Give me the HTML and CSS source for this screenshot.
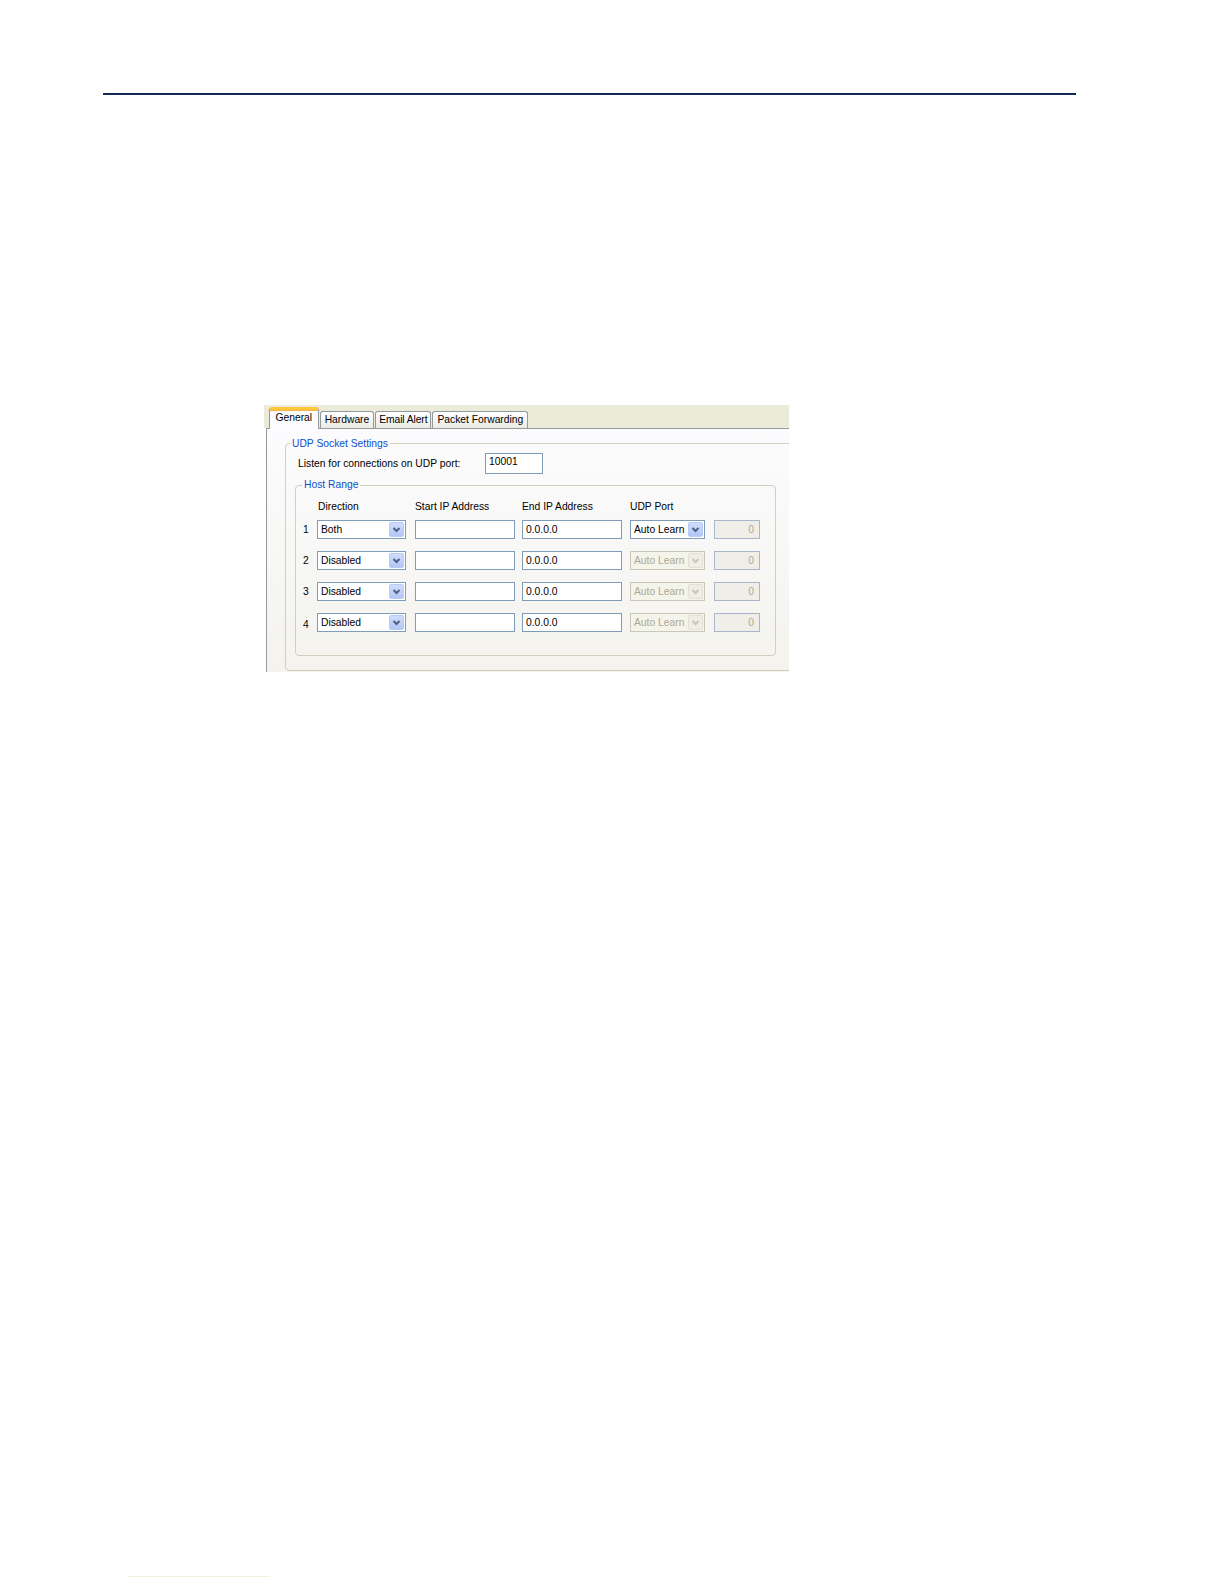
FILE: index.html
```html
<!DOCTYPE html>
<html lang="en">
<head>
  <meta charset="UTF-8" />
  <title>UDP Socket Settings</title>
  <link rel="stylesheet" href="styles.css">
</head>
<body>

  <div class="rule"></div>

  <div class="shot">
    <div class="tabs">
      <div class="tab active">General</div>
      <div class="tab">Hardware</div>
      <div class="tab email">Email Alert</div>
      <div class="tab">Packet Forwarding</div>
    </div>

    <div class="panel">
      <div class="group outer">
        <div class="group-title">UDP Socket Settings</div>

        <div class="listen">
          <span class="listen-label">Listen for connections on UDP port:</span>
          <div class="field port">10001</div>
        </div>

        <div class="group inner">
          <div class="group-title">Host Range</div>

          <div class="hosts">
            <div class="head"></div>
            <div class="head">Direction</div>
            <div class="head">Start IP Address</div>
            <div class="head">End IP Address</div>
            <div class="head">UDP Port</div>
            <div class="head"></div>

            <!-- строка 1 -->
            <div class="num">1</div>
            <div><div class="select dir"><span>Both</span><span class="drop"><svg viewBox="0 0 13 13"><path d="M3.5 5 L6.5 8 L9.5 5" /></svg></span></div></div>
            <div><div class="field ip"></div></div>
            <div><div class="field ip">0.0.0.0</div></div>
            <div><div class="select udp"><span>Auto Learn</span><span class="drop"><svg viewBox="0 0 13 13"><path d="M3.5 5 L6.5 8 L9.5 5" /></svg></span></div></div>
            <div><div class="field count">0</div></div>

            <!-- строка 2 -->
            <div class="num">2</div>
            <div><div class="select dir"><span>Disabled</span><span class="drop"><svg viewBox="0 0 13 13"><path d="M3.5 5 L6.5 8 L9.5 5" /></svg></span></div></div>
            <div><div class="field ip"></div></div>
            <div><div class="field ip">0.0.0.0</div></div>
            <div><div class="select udp disabled"><span>Auto Learn</span><span class="drop"><svg viewBox="0 0 13 13"><path d="M3.5 5 L6.5 8 L9.5 5" /></svg></span></div></div>
            <div><div class="field count">0</div></div>

            <!-- строка 3 -->
            <div class="num">3</div>
            <div><div class="select dir"><span>Disabled</span><span class="drop"><svg viewBox="0 0 13 13"><path d="M3.5 5 L6.5 8 L9.5 5" /></svg></span></div></div>
            <div><div class="field ip"></div></div>
            <div><div class="field ip">0.0.0.0</div></div>
            <div><div class="select udp disabled"><span>Auto Learn</span><span class="drop"><svg viewBox="0 0 13 13"><path d="M3.5 5 L6.5 8 L9.5 5" /></svg></span></div></div>
            <div><div class="field count">0</div></div>

            <!-- строка 4 -->
            <div class="num low">4</div>
            <div><div class="select dir"><span>Disabled</span><span class="drop"><svg viewBox="0 0 13 13"><path d="M3.5 5 L6.5 8 L9.5 5" /></svg></span></div></div>
            <div><div class="field ip"></div></div>
            <div><div class="field ip">0.0.0.0</div></div>
            <div><div class="select udp disabled"><span>Auto Learn</span><span class="drop"><svg viewBox="0 0 13 13"><path d="M3.5 5 L6.5 8 L9.5 5" /></svg></span></div></div>
            <div><div class="field count">0</div></div>
          </div>
        </div>
      </div>
    </div>
  </div>

  <div class="foot-rule"></div>

</body>
</html>
```

FILE: styles.css
```css
/* Страница */
body {
  margin: 0;
  background: #fff;
  font-family: 'Liberation Sans', Arial, sans-serif;
  font-size: 10.3px;
  color: #000;
}

.rule {
  margin: 93px 0 0 103px;
  width: 973px;
  height: 2px;
  background: #10295a;
}

.foot-rule {
  margin: 904px 0 0 128px;
  width: 142px;
  height: 1px;
  background: #f1f1e2;
}

/* Скриншот диалога */
.shot {
  margin: 310px 0 0 264px;
  width: 525px;
  height: 267px;
  overflow: hidden;
  background: #fff;
}

.tabs {
  display: flex;
  align-items: flex-end;
  gap: 1px;
  height: 23px;
  padding-left: 5px;
  background: #ecead9;
}

.tab {
  box-sizing: border-box;
  height: 17px;
  padding: 0 4px;
  border: 1px solid #919b9c;
  border-bottom: 0;
  border-radius: 3px 3px 0 0;
  background: linear-gradient(#ffffff, #ecebe5);
  display: flex;
  align-items: center;
  justify-content: center;
  line-height: 1;
  white-space: nowrap;
}

.tab.email {
  padding: 0 3px;
  letter-spacing: -0.1px;
}

.tab.active {
  position: relative;
  z-index: 1;
  height: 22px;
  margin-bottom: -1px;
  padding: 0 5.5px 3px;
  border-top: 3px solid #ffc83c;
  box-shadow: inset 0 1px 0 #f5b04a;
  background: #fcfcfe;
}

.panel {
  margin-left: 2px;
  height: 243px;
  padding: 14px 0 0 18px;
  border-top: 1px solid #919b9c;
  border-left: 1px solid #919b9c;
  background: linear-gradient(#fcfcfe, #f3f2ec);
}

/* Рамки групп */
.group {
  box-sizing: border-box;
  border: 1px solid #d0d0bf;
  border-radius: 4px;
}

.group-title {
  width: fit-content;
  padding: 0 2px;
  line-height: 12px;
  color: #0b4fd0;
  background: #fbfbfc;
}

.outer {
  width: 540px;
  height: 228px;
  padding-left: 12px;
}
.outer > .group-title {
  margin: -6px 0 0 -8px;
}

.listen {
  display: flex;
  align-items: center;
  margin-top: 3px;
  height: 21px;
}

.listen-label {
  width: 187px;
  white-space: nowrap;
}

.inner {
  width: 481px;
  height: 171px;
  margin: 11px 0 0 -3px;
  padding-left: 6px;
}
.inner > .group-title {
  margin-top: -7px;
  background: #f9f9f8;
}

/* Таблица хостов */
.hosts {
  display: grid;
  grid-template-columns: 15px 98px 107px 108px 84px 46px;
  grid-template-rows: 16px repeat(4, 31px);
  align-items: center;
  margin-top: 7px;
}

.head {
  white-space: nowrap;
}
.head:nth-child(2) {
  padding-left: 1px;
}

.num {
  padding-left: 1px;
}
.num.low {
  padding-top: 3px;
}

/* Поля ввода */
.field {
  box-sizing: border-box;
  height: 19px;
  border: 1px solid #7f9db9;
  background: #fff;
  padding: 0 3px;
  display: flex;
  align-items: center;
  white-space: nowrap;
}

.field.port {
  width: 58px;
  height: 21px;
  align-items: flex-start;
  padding-top: 2px;
}

.field.ip {
  width: 100px;
}

.field.count {
  width: 46px;
  justify-content: flex-end;
  padding-right: 5px;
  border-color: #a7b7cc;
  background: #efeee8;
  color: #aca899;
}

/* Выпадающие списки */
.select {
  box-sizing: border-box;
  height: 19px;
  border: 1px solid #7f9db9;
  background: #fff;
  padding-left: 3px;
  display: flex;
  align-items: center;
  justify-content: space-between;
  white-space: nowrap;
  overflow: hidden;
}

.select.dir {
  width: 89px;
}

.select.udp {
  width: 75px;
}

.drop {
  box-sizing: border-box;
  flex: none;
  width: 15px;
  height: 15px;
  margin-right: 1px;
  border: 1px solid #b6cbf7;
  border-radius: 2px;
  background: linear-gradient(#cfdcfd, #b2c7f5);
  display: flex;
  align-items: center;
  justify-content: center;
}

.drop svg {
  width: 13px;
  height: 13px;
}

.drop path {
  fill: none;
  stroke: #4d6185;
  stroke-width: 2;
}

.select.disabled {
  border-color: #c9c7ba;
  background: #f5f4ea;
  color: #aca899;
}

.select.disabled .drop {
  border-color: #e3e1d6;
  background: #efeee6;
}

.select.disabled .drop path {
  stroke: #c9c7ba;
}
```
